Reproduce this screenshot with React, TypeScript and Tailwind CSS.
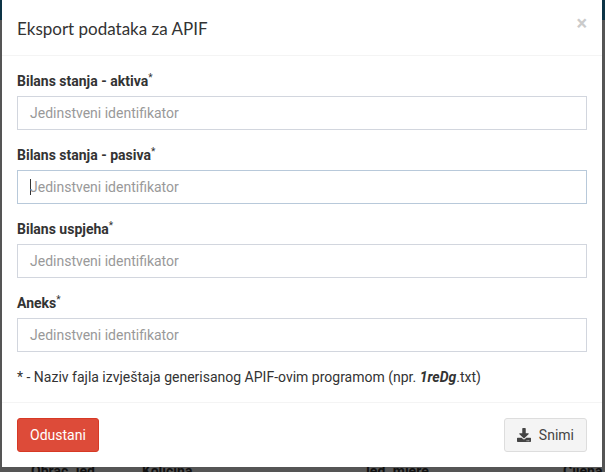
import { FaDownload } from 'react-icons/fa'

const fields = [
  { label: 'Bilans stanja - aktiva', focused: false },
  { label: 'Bilans stanja - pasiva', focused: true },
  { label: 'Bilans uspjeha', focused: false },
  { label: 'Aneks', focused: false }
]

export default function App() {
  return (
    <div className="relative h-[472px] w-[605px] overflow-hidden bg-[#555] font-['Roboto',sans-serif]">
      {/* page behind the backdrop */}
      <div className="h-5 bg-[#0d3446]" />
      <div className="absolute left-[31px] top-[461px] flex text-sm font-bold text-[#111]">
        <span className="w-[111px]">Obrač. jed.</span>
        <span className="w-[220px]">Količina</span>
        <span className="w-[201px]">Jed. mjere</span>
        <span>Cijena</span>
      </div>

      <div className="absolute left-[2px] top-0 flex h-[467px] w-[600px] flex-col bg-white text-[#333]">
        <div className="flex h-[56px] items-start justify-between border-b border-[#f4f4f4] px-[15px]">
          <h4 className="mt-[16px] font-['Lato',sans-serif] text-[17px] leading-[26px] text-[#333]">
            Eksport podataka za APIF
          </h4>
          <span className="mt-[14px] text-[20px] font-bold leading-[18px] text-[#cbcbcb]">×</span>
        </div>
        <div className="flex flex-1 flex-col px-[15px] pt-[15px]">
          {fields.map((field) => (
            <div key={field.label} className="mb-[15px] flex flex-col">
              <label className="mb-[5px] h-5 text-sm font-bold leading-5">
                {field.label}
                <sup className="text-[10px] font-normal">*</sup>
              </label>
              <div
                className={`flex h-[34px] items-center border px-3 text-sm text-[#999] ${
                  field.focused ? 'border-[#b8c9da]' : 'border-[#d2d6de]'
                }`}
              >
                {field.focused && <span className="mr-[-1px] h-4 w-px bg-[#333]" />}
                Jedinstveni identifikator
              </div>
            </div>
          ))}
          <p className="text-sm leading-5">
            * - Naziv fajla izvještaja generisanog APIF-ovim programom (npr. <b className="italic">1reDg</b>.txt)
          </p>
        </div>
        <div className="flex h-[65px] items-start justify-between border-t border-[#f4f4f4] px-[15px] pt-[15px]">
          <button className="h-[34px] rounded-[3px] border border-[#d73925] bg-[#dd4b39] px-3 text-sm text-white">
            Odustani
          </button>
          <button className="flex h-[34px] items-center gap-2 rounded-[3px] border border-[#ddd] bg-[#f4f4f4] px-3 text-sm text-[#444]">
            <FaDownload size={14} />
            Snimi
          </button>
        </div>
      </div>
    </div>
  )
}
